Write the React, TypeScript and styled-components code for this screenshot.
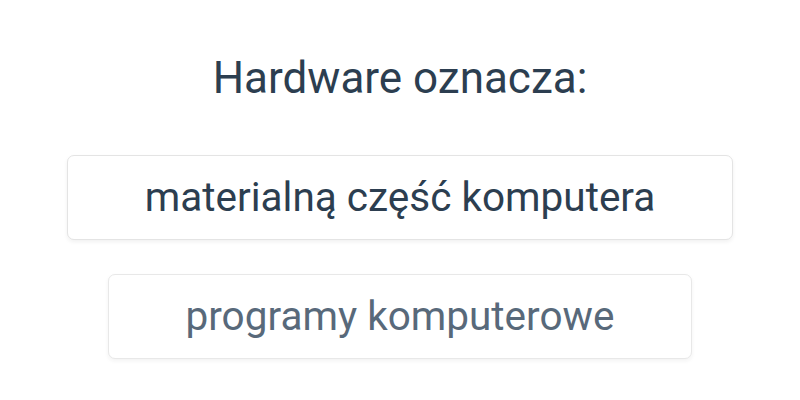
import React from "react";
import styled, { createGlobalStyle } from "styled-components";

const GlobalStyle = createGlobalStyle`
  html, body {
    margin: 0;
    padding: 0;
    background: #ffffff;
  }
  body {
    font-family: Roboto, "Noto Sans", "Liberation Sans", sans-serif;
    color: #2c3e50;
  }
`;

const Page = styled.main`
  width: 800px;
  height: 400px;
  display: flex;
  flex-direction: column;
  align-items: center;
  padding-top: 52px;
  box-sizing: border-box;
`;

const Question = styled.h2`
  margin: 0 0 51px;
  font-size: 44px;
  font-weight: 400;
  line-height: 52px;
  color: #2c3e50;
`;

const Answers = styled.div`
  display: flex;
  flex-direction: column;
  align-items: center;
  gap: 34px;
`;

const Answer = styled.button<{ $faded?: boolean }>`
  font-family: inherit;
  font-size: 40.5px;
  font-weight: 400;
  line-height: 47px;
  padding: 18px 77px;
  background: #ffffff;
  color: ${(p) => (p.$faded ? "#34495e" : "#2c3e50")};
  border: 1px solid #e4e4e4;
  border-radius: 7px;
  box-shadow: 0 2px 4px rgba(0, 0, 0, 0.06);
  cursor: pointer;
  opacity: ${(p) => (p.$faded ? 0.82 : 1)};
`;

const answers = [
  { label: "materialną część komputera", faded: false },
  { label: "programy komputerowe", faded: true },
];

export default function App() {
  return (
    <>
      <GlobalStyle />
      <Page>
        <Question>Hardware oznacza:</Question>
        <Answers>
          {answers.map((a) => (
            <Answer key={a.label} $faded={a.faded}>
              {a.label}
            </Answer>
          ))}
        </Answers>
      </Page>
    </>
  );
}
